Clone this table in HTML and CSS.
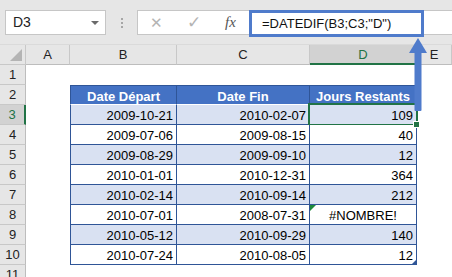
FILE: index.html
```html
<!DOCTYPE html>
<html lang="fr">
<head>
  <meta charset="UTF-8" />
  <title>DATEDIF – Jours Restants</title>
  <link rel="stylesheet" href="styles.css">
</head>
<body>
  <div class="toolbar">
    <div class="namebox">D3<span class="caret"></span></div>
    <div class="grip"><i></i><i></i><i></i></div>
    <div class="fbar">
      <div class="fbtns">
        <span class="btn-x">✕</span>
        <span class="btn-ok">✓</span>
        <span class="btn-fx">fx</span>
      </div>
      <div class="formula">=DATEDIF(B3;C3;"D")</div>
    </div>
  </div>

  <div class="sheet">
    <div class="corner"></div>
    <div class="colhead">A</div>
    <div class="colhead">B</div>
    <div class="colhead">C</div>
    <div class="colhead active">D</div>
    <div class="colhead">E</div>

    <div class="rowhead">1</div><div></div><div></div><div></div><div></div><div></div>

    <div class="rowhead">2</div><div></div>
    <div class="th first">Date Départ</div>
    <div class="th">Date Fin</div>
    <div class="th">Jours Restants</div>
    <div></div>

    <div class="rowhead active">3</div><div></div>
    <div class="td first band">2009-10-21</div>
    <div class="td band">2010-02-07</div>
    <div class="td band sel">109<span class="handle"></span></div>
    <div></div>

    <div class="rowhead">4</div><div></div>
    <div class="td first">2009-07-06</div>
    <div class="td">2009-08-15</div>
    <div class="td">40</div>
    <div></div>

    <div class="rowhead">5</div><div></div>
    <div class="td first band">2009-08-29</div>
    <div class="td band">2009-09-10</div>
    <div class="td band">12</div>
    <div></div>

    <div class="rowhead">6</div><div></div>
    <div class="td first">2010-01-01</div>
    <div class="td">2010-12-31</div>
    <div class="td">364</div>
    <div></div>

    <div class="rowhead">7</div><div></div>
    <div class="td first band">2010-02-14</div>
    <div class="td band">2010-09-14</div>
    <div class="td band">212</div>
    <div></div>

    <div class="rowhead">8</div><div></div>
    <div class="td first">2010-07-01</div>
    <div class="td">2008-07-31</div>
    <div class="td err">#NOMBRE!</div>
    <div></div>

    <div class="rowhead">9</div><div></div>
    <div class="td first band">2010-05-12</div>
    <div class="td band">2010-09-29</div>
    <div class="td band">140</div>
    <div></div>

    <div class="rowhead">10</div><div></div>
    <div class="td first">2010-07-24</div>
    <div class="td">2010-08-05</div>
    <div class="td last">12</div>
    <div></div>

    <div class="rowhead">11</div><div></div><div></div><div></div><div></div><div></div>
  </div>

  <svg class="arrow" width="26" height="78" viewBox="0 0 26 78">
    <rect x="9.5" y="15" width="7" height="60" rx="1" fill="#4f7bcb"/>
    <polygon points="4,17 22,17 13,2" fill="#4f7bcb"/>
  </svg>
</body>
</html>
```

FILE: styles.css
```css
:root {
  --chrome: #e6e6e6;
  --chrome-line: #c8c8c8;
  --excel-green: #217346;
  --table-blue: #4472c4;
  --table-line: #2f5597;
  --band: #d9e1f2;
  --note-blue: #4f7bcb;
}

body {
  margin: 0;
  font-family: "Liberation Sans", Arial, sans-serif;
  color: #000;
  background: #fff;
  overflow: hidden;
}

/* formula bar */
.toolbar {
  display: flex;
  align-items: flex-start;
  height: 45px;
  box-sizing: border-box;
  padding: 10px 0 0 5px;
  background: var(--chrome);
  border-bottom: 1px solid #dadada;
}

.namebox {
  position: relative;
  width: 101px;
  height: 25px;
  box-sizing: border-box;
  padding-left: 7px;
  background: #fff;
  border: 1px solid #c6c6c6;
  font-size: 14px;
  line-height: 23px;
  color: #222;
}

.caret {
  position: absolute;
  right: 6px;
  top: 10px;
  border-left: 4px solid transparent;
  border-right: 4px solid transparent;
  border-top: 4px solid #6a6a6a;
}

.grip {
  width: 31px;
  height: 25px;
  display: flex;
  flex-direction: column;
  align-items: center;
  justify-content: center;
  gap: 2px;
}

.grip i {
  width: 2px;
  height: 2px;
  background: #a6a6a6;
}

.fbar {
  flex: 1;
  display: flex;
  height: 25px;
  box-sizing: border-box;
  background: #fff;
  border: 1px solid #c6c6c6;
  border-right: none;
}

.fbtns {
  width: 111px;
  display: flex;
  align-items: center;
}

.fbtns span {
  width: 37px;
  text-align: center;
}

.btn-x {
  color: #b4b4b4;
  font-size: 15px;
}

.btn-ok {
  color: #b4b4b4;
  font-size: 17px;
}

.btn-fx {
  font-family: "Liberation Serif", serif;
  font-style: italic;
  font-size: 15px;
  color: #555;
}

.formula {
  width: 175px;
  height: 27px;
  margin-top: -1px;
  box-sizing: border-box;
  padding-left: 10px;
  border: 3px solid var(--note-blue);
  background: #fff;
  font-size: 13px;
  line-height: 21px;
  color: #111;
}

/* grid */
.sheet {
  display: grid;
  grid-template-columns: 26px 44px 107px 133px 107px 1fr;
  grid-auto-rows: 20px;
  font-size: 13px;
}

.corner {
  position: relative;
  background: var(--chrome);
  border-right: 1px solid var(--chrome-line);
  border-bottom: 1px solid var(--chrome-line);
}

.corner::after {
  content: "";
  position: absolute;
  right: 3px;
  bottom: 3px;
  border-left: 12px solid transparent;
  border-bottom: 12px solid #b4b4b4;
}

.colhead {
  background: var(--chrome);
  border-right: 1px solid var(--chrome-line);
  border-bottom: 1px solid #bdbdbd;
  text-align: center;
  line-height: 20px;
  color: #222;
}

.colhead.active {
  background: #d2d2d2;
  color: var(--excel-green);
  border-bottom: 2px solid var(--excel-green);
}

.rowhead {
  background: var(--chrome);
  border-right: 1px solid #bdbdbd;
  border-bottom: 1px solid var(--chrome-line);
  text-align: center;
  line-height: 20px;
  color: #222;
}

.rowhead.active {
  background: #d2d2d2;
  color: var(--excel-green);
  border-right: 2px solid var(--excel-green);
}

.th,
.td {
  position: relative;
  display: flex;
  align-items: center;
  box-sizing: border-box;
  border-right: 1px solid var(--table-line);
  border-bottom: 1px solid var(--table-line);
  padding: 2px 3px 0;
  white-space: nowrap;
}

.th {
  justify-content: center;
  background: var(--table-blue);
  color: #fff;
  font-weight: bold;
  border-top: 1px solid var(--table-line);
  border-bottom-color: #fff;
}

.td {
  justify-content: flex-end;
  background: #fff;
}

.first {
  border-left: 1px solid var(--table-line);
}

.band {
  background: var(--band);
}

.sel::after {
  content: "";
  position: absolute;
  left: -2px;
  top: -2px;
  right: -2px;
  bottom: -2px;
  border: 2px solid var(--excel-green);
}

.handle {
  position: absolute;
  right: -4px;
  bottom: -4px;
  width: 5px;
  height: 5px;
  background: var(--excel-green);
  border: 1px solid #fff;
  z-index: 2;
}

.err {
  justify-content: center;
}

.err::before {
  content: "";
  position: absolute;
  left: 0;
  top: 0;
  border-top: 6px solid #1e8a3c;
  border-right: 6px solid transparent;
}

.last::after {
  content: "";
  position: absolute;
  right: 0;
  bottom: 0;
  border-left: 4px solid transparent;
  border-bottom: 4px solid var(--table-line);
}

.arrow {
  position: absolute;
  left: 405px;
  top: 36px;
}
```
